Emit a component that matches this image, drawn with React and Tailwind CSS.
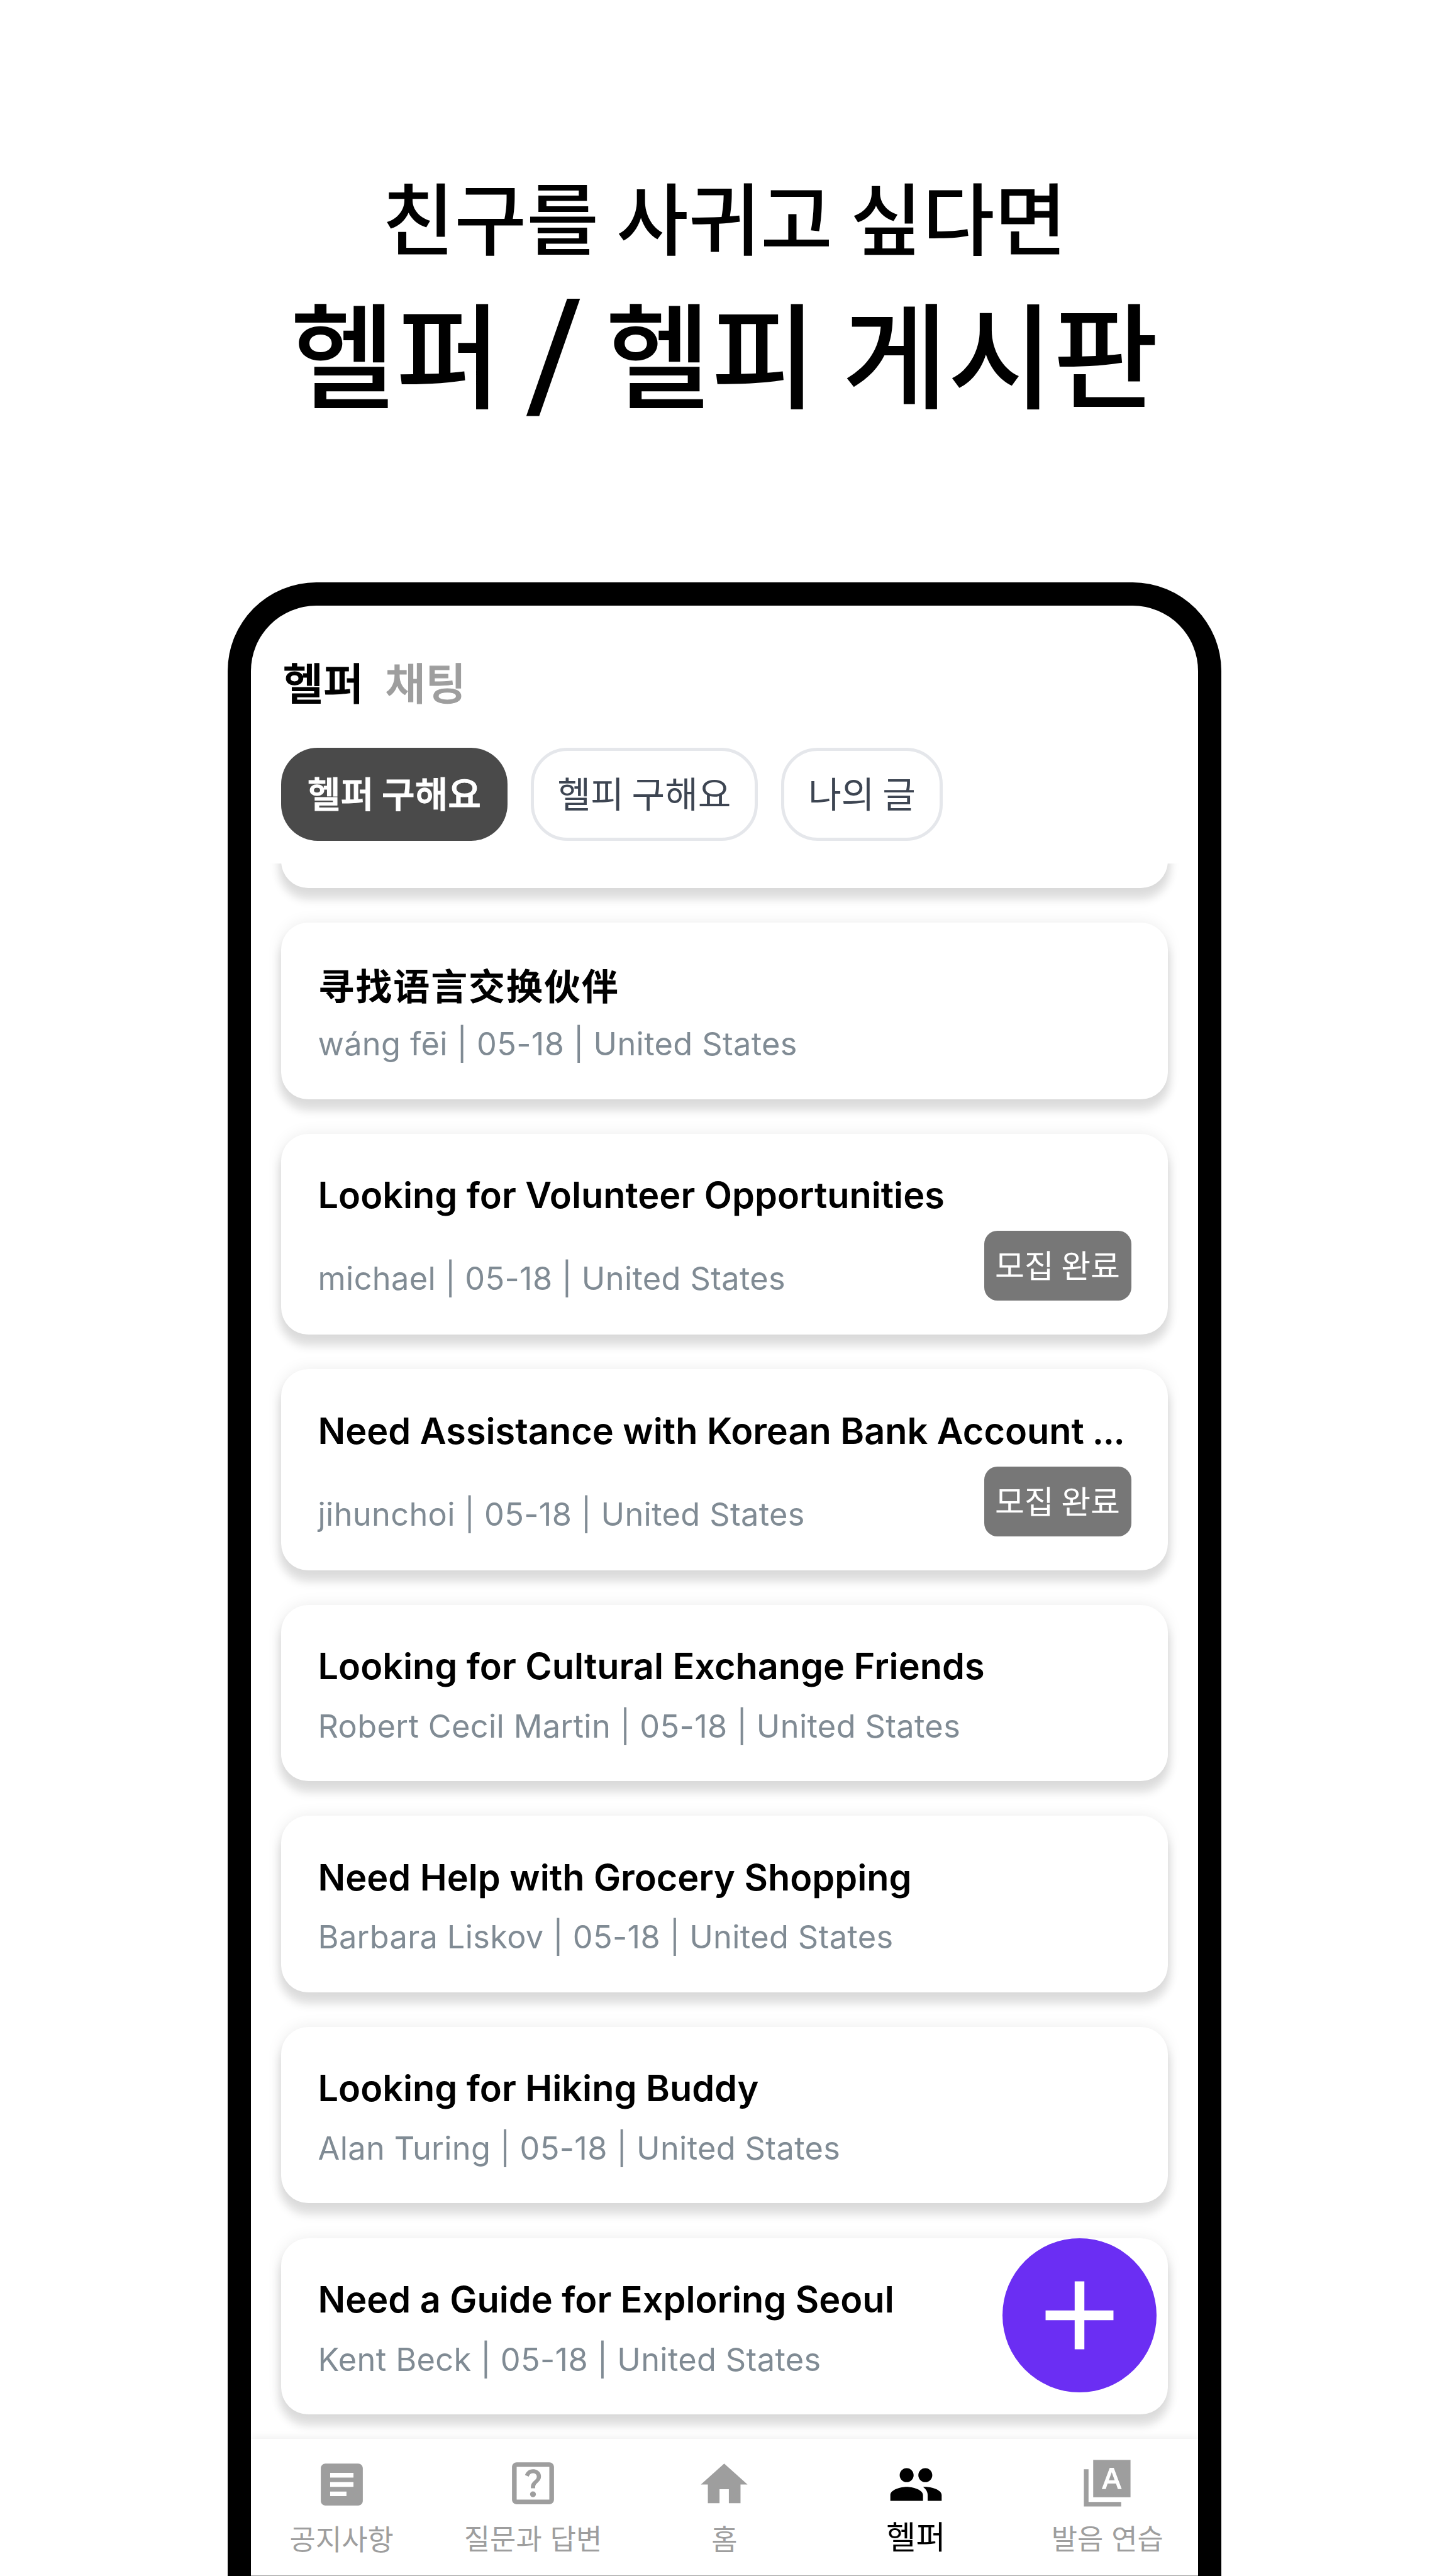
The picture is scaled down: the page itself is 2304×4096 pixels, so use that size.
import { MdAdd, MdArticle, MdHome, MdOutlineHelpCenter, MdPeople } from "react-icons/md";

const KR = "font-['Noto_Sans_CJK_KR','Noto_Sans_CJK_SC',sans-serif]";
const LATIN = "font-['Inter','Noto_Sans_CJK_KR',sans-serif]";
const SC = "font-['Noto_Sans_CJK_SC',sans-serif]";

// Half step between the medium and bold cuts of the Korean face.
const SEMI = "font-medium [-webkit-text-stroke:1.2px_currentColor]";

const posts = [
  { title: "寻找语言交换伙伴", author: "wáng fēi", chinese: true },
  { title: "Looking for Volunteer Opportunities", author: "michael", closed: true },
  { title: "Need Assistance with Korean Bank Account", author: "jihunchoi", closed: true, cut: true },
  { title: "Looking for Cultural Exchange Friends", author: "Robert Cecil Martin" },
  { title: "Need Help with Grocery Shopping", author: "Barbara Liskov" },
  { title: "Looking for Hiking Buddy", author: "Alan Turing" },
  { title: "Need a Guide for Exploring Seoul", author: "Kent Beck" },
];

const CARD =
  "shrink-0 rounded-[43px] bg-white shadow-[0_16px_14px_3px_rgba(0,0,0,0.115),0_0_24px_rgba(0,0,0,0.08)]";

function AlphabetCardsIcon({ className }) {
  return (
    <svg viewBox="0 0 24 24" fill="currentColor" className={className}>
      <path
        fillRule="evenodd"
        d="M6 2h16v16H6zM13.08 5.4 9.68 14.5h1.7l.8-2.35h3.6l.8 2.35h1.65l-3.4-9.1zM13.95 7.25 15.2 10.75h-2.5z"
      />
      <path d="M2 6h2v14h14v2H2z" />
    </svg>
  );
}

function Chip({ active, className, children }) {
  return (
    <button
      className={`flex h-[148px] items-center justify-center rounded-[58px] pb-[6px] text-[57.2px] leading-none whitespace-nowrap ${
        active ? `bg-[#4a4a4a] text-white ${SEMI}` : "border-[5px] border-[#e5e7eb] text-[#3d4552]"
      } ${className}`}
    >
      {children}
    </button>
  );
}

function PostCard({ post }) {
  return (
    <article className={`${CARD} px-[58.5px] pt-[57.5px] ${post.closed ? "h-[319.3px]" : "h-[280.5px]"}`}>
      <h2
        className={`h-[80px] leading-[80px] whitespace-nowrap text-black ${
          post.chinese
            ? `${SC} text-[58px] font-bold tracking-[1.9px]`
            : `${LATIN} text-[57.6px] font-semibold`
        }`}
      >
        {post.title}
        {post.cut && <span className="tracking-[-1.5px]"> ...</span>}
      </h2>
      <div className={`flex items-end justify-between ${post.closed ? "mt-[17px] h-[111px] pb-[3px]" : "mt-[23.5px]"}`}>
        <p className={`${LATIN} text-[50.5px] leading-[64px] tracking-[0.34px] whitespace-nowrap text-[#808b94]`}>
          {post.author} | 05-18 | United States
        </p>
        {post.closed && (
          <span className="-mb-[3px] flex h-[111px] w-[234px] items-center justify-center rounded-[21px] bg-[#777777] pb-[4px] text-[51px] leading-none whitespace-nowrap text-white">
            모집 완료
          </span>
        )}
      </div>
    </article>
  );
}

const tabs = [
  { label: "공지사항", Icon: MdArticle, pad: "pt-[28px]" },
  { label: "질문과 답변", Icon: MdOutlineHelpCenter, pad: "pt-[26.5px]" },
  { label: "홈", Icon: MdHome, pad: "pt-[28px]" },
  { label: "헬퍼", Icon: MdPeople, pad: "pt-[28px]", active: true },
  { label: "발음 연습", Icon: AlphabetCardsIcon, pad: "pt-[26.5px]" },
];

function BottomNav() {
  return (
    <nav className="relative h-[218.5px] shrink-0 border-b border-[#9e9e9e] bg-white shadow-[0_-2px_12px_rgba(0,0,0,0.07)]">
      <ul className="-mx-[8px] grid grid-cols-5">
        {tabs.map(({ label, Icon, pad, active }) => (
          <li key={label} className={`flex flex-col items-center ${pad} ${active ? "text-black" : "text-[#9e9e9e]"}`}>
            <Icon className="size-[89px]" />
            <span
              className={`leading-[60px] whitespace-nowrap [word-spacing:3px] ${
                active ? "mt-[6px] text-[51.2px]" : "mt-[11.5px] text-[44.9px]"
              }`}
            >
              {label}
            </span>
          </li>
        ))}
      </ul>
    </nav>
  );
}

export default function App() {
  return (
    <div className={`${KR} flex h-[4096px] w-[2304px] flex-col overflow-hidden bg-white text-black`}>
      <header className="flex shrink-0 flex-col items-center pt-[262px] text-center font-medium whitespace-nowrap">
        <p className="text-[124.7px] leading-[160px]">친구를 사귀고 싶다면</p>
        <h1 className="mt-[34px] flex text-[182.2px] leading-[200px]">
          <span>헬퍼</span>
          <span className="w-[166px] translate-y-[5px] -skew-x-[4.5deg] font-['Inter',sans-serif] text-[214px]">/</span>
          <span>헬피 게시판</span>
        </h1>
      </header>

      <main className="relative mx-auto mt-[269.5px] flex min-h-0 w-[1580px] flex-1 flex-col overflow-hidden rounded-t-[141px] border-x-[37px] border-t-[37px] border-black bg-white">
        <div className={`flex shrink-0 gap-[34px] pt-[80px] pl-[51px] text-[69.8px] leading-[80px] ${SEMI}`}>
          <span>헬퍼</span>
          <span className="text-[#9e9e9e] [-webkit-text-stroke:1.2px_#9e9e9e]">채팅</span>
        </div>
        <div className="mt-[66px] flex shrink-0 gap-[37px] pl-[48px]">
          <Chip active className="w-[360px]">헬퍼 구해요</Chip>
          <Chip className="w-[361px]">헬피 구해요</Chip>
          <Chip className="w-[257px]">나의 글</Chip>
        </div>
        <section className="mt-[36.3px] flex min-h-0 flex-1 flex-col justify-start gap-[55.1px] overflow-hidden px-[48px]">
          <div className={`${CARD} -mt-[241px] h-[280.5px]`} />
          {posts.map((post) => (
            <PostCard key={post.title} post={post} />
          ))}
        </section>
        <BottomNav />
        <button className="absolute right-[66px] bottom-[292px] flex size-[245px] items-center justify-center rounded-full bg-[#6b2ef3] text-white">
          <MdAdd className="size-[185px]" />
        </button>
      </main>
    </div>
  );
}
